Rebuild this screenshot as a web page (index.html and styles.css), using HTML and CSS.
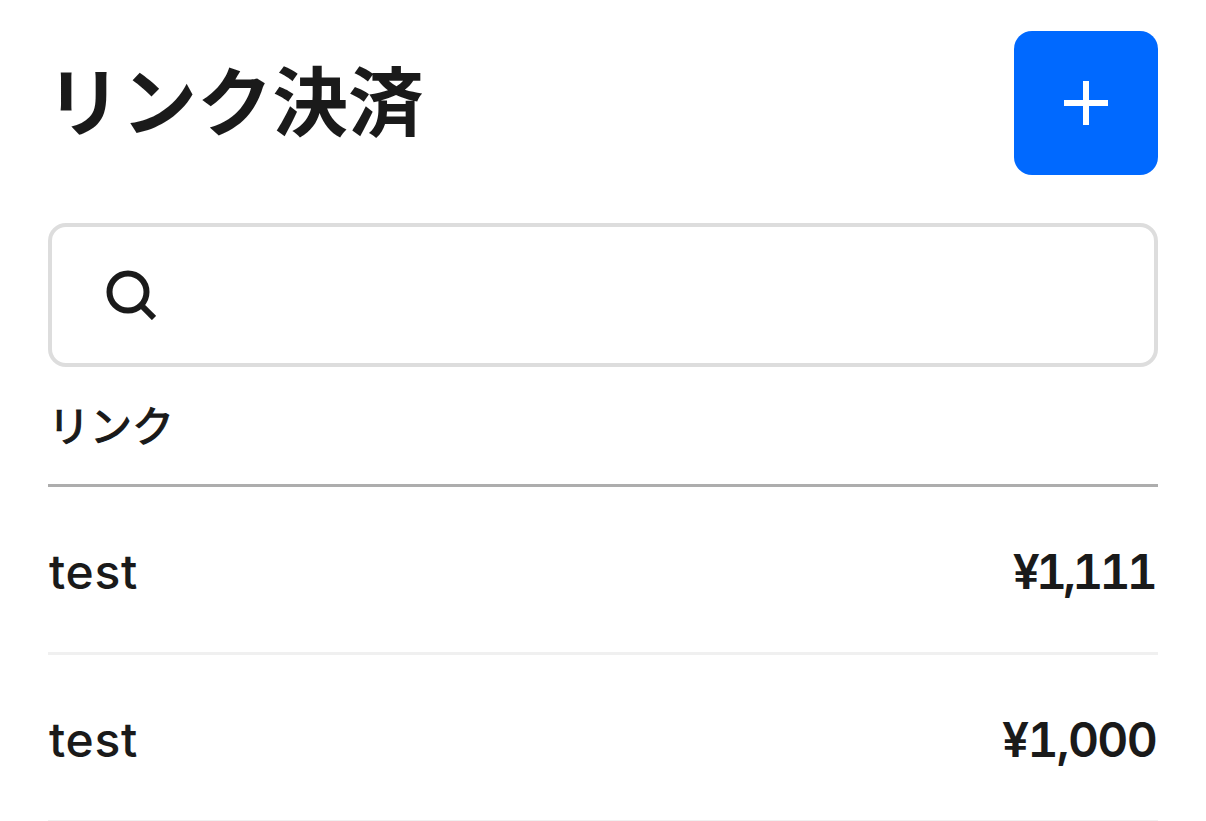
FILE: index.html
```html
<!DOCTYPE html>
<html lang="ja">

<head>
    <meta charset="UTF-8">
    <title>リンク決済</title>
    <link rel="stylesheet" href="styles.css">
</head>

<body>
    <!-- Title and add button -->
    <header class="page-header">
        <h1 class="page-title">リンク決済</h1>
        <button class="add-btn" type="button" aria-label="追加">
            <svg width="44" height="44" viewBox="0 0 44 44">
                <path d="M22 0v44M0 22h44" stroke="#fff" stroke-width="6" fill="none" />
            </svg>
        </button>
    </header>

    <!-- Search -->
    <div class="search-box">
        <svg class="search-icon" width="50" height="50" viewBox="0 0 50 50">
            <circle cx="22" cy="22" r="18.5" stroke="#1a1a1a" stroke-width="6" fill="none" />
            <path d="M34 34l14 14" stroke="#1a1a1a" stroke-width="6" fill="none" />
        </svg>
    </div>

    <!-- Link list -->
    <div class="list-heading">リンク</div>
    <ul class="link-list">
        <li class="link-item">
            <span class="link-name">test</span>
            <span class="link-amount link-amount-tight">¥1,111</span>
        </li>
        <li class="link-item">
            <span class="link-name">test</span>
            <span class="link-amount">¥1,000</span>
        </li>
    </ul>
</body>

</html>
```

FILE: styles.css
```css
body {
    margin: 0;
    padding: 31px 48px 0;
    background-color: #fff;
    color: #1a1a1a;
    font-family: Inter, "Noto Sans CJK JP", sans-serif;
    overflow: hidden;
}

/* Title and add button */
.page-header {
    display: flex;
    justify-content: space-between;
    align-items: center;
}

.page-title {
    margin: 0 0 0 -2px;
    font-size: 75.5px;
    font-weight: 700;
    line-height: 1;
}

.add-btn {
    display: flex;
    align-items: center;
    justify-content: center;
    width: 144px;
    height: 144px;
    padding: 0;
    border: none;
    border-radius: 18px;
    background-color: #0069ff;
}

/* Search */
.search-box {
    display: flex;
    align-items: center;
    box-sizing: border-box;
    height: 144px;
    margin-top: 48px;
    padding-left: 54px;
    border: 4px solid #ddd;
    border-radius: 18px;
}

/* Link list */
.list-heading {
    padding: 36px 0 33px;
    border-bottom: 3px solid #adadad;
    font-size: 42px;
    font-weight: 400;
    -webkit-text-stroke: 1.2px #1a1a1a;
    line-height: 48px;
}

.link-list {
    margin: 0;
    padding: 0;
    list-style: none;
}

.link-item {
    display: flex;
    justify-content: space-between;
    align-items: center;
    box-sizing: border-box;
    height: 168px;
    padding: 4px 2px 0 0;
    border-bottom: 3px solid #f0f0f0;
    font-size: 48px;
    font-weight: 500;
}

.link-name {
    margin-left: 1px;
    letter-spacing: 0.7px;
}

.link-amount {
    font-weight: 600;
    font-feature-settings: "tnum";
    letter-spacing: -1.7px;
}

.link-amount-tight {
    margin-right: 2px;
    letter-spacing: -3.8px;
}
```
